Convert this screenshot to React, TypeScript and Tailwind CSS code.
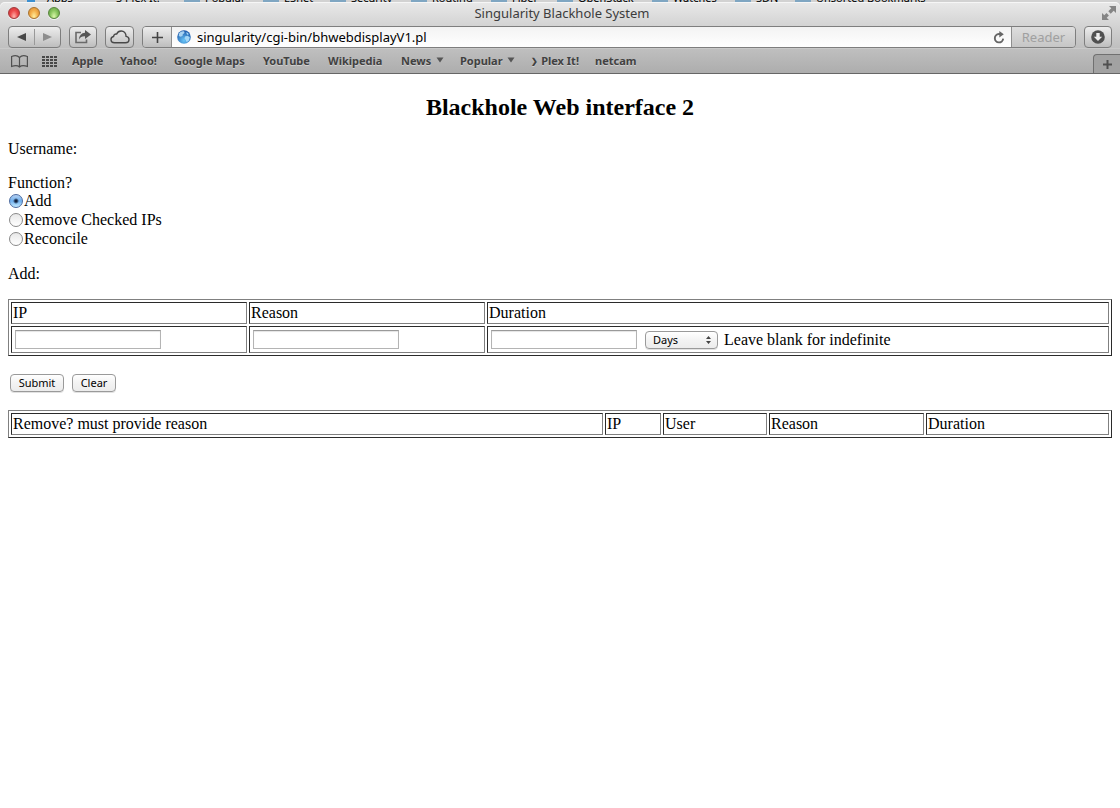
import type { ReactNode } from "react";

const ui = "font-['Noto_Sans','Open_Sans',sans-serif]";
const toolButton =
  "flex h-[22px] items-center justify-center rounded-[4px] border border-[#7e7e7e] bg-linear-to-b from-[#ededed] to-[#bebebe]";
const pushButton =
  "h-[18px] rounded-[4px] border border-[#9a9a9a] bg-linear-to-b from-white via-[#f3f3f3] to-[#ececec] text-[11px] leading-4 text-black shadow-[0_1px_0_#e2e2e2]";
const tableFrame =
  "w-full table-fixed border-separate border-spacing-[2px] border border-t-[#808080] border-r-[#2b2b2b] border-b-[#2b2b2b] border-l-[#808080]";
const cell =
  "border border-t-[#2b2b2b] border-r-[#808080] border-b-[#808080] border-l-[#2b2b2b] p-px text-left font-normal";
const field =
  "m-[2px] block h-[19px] w-[146px] border border-[#b4b4b4] border-t-[#9a9a9a] bg-white px-1 text-[11px] shadow-[inset_0_1px_1px_#e4e4e4] outline-none";

const folders = [
  { name: "Popular", width: "w-[79px]" },
  { name: "ESnet", width: "w-[67px]" },
  { name: "Security", width: "w-[81px]" },
  { name: "Routing", width: "w-[80px]" },
  { name: "Fiber", width: "w-[66px]" },
  { name: "OpenStack", width: "w-[95px]" },
  { name: "Watches", width: "w-[83px]" },
  { name: "SDN", width: "w-[60px]" },
  { name: "Unsorted Bookmarks", width: "w-[160px]" },
];

function BackWindow() {
  return (
    <div className="flex h-[2px] items-end overflow-hidden bg-[#d2d2d2] text-[11px] leading-2 whitespace-nowrap text-black" aria-hidden="true">
      <span className="flex w-[116px] shrink-0 items-end gap-3 pl-[27px]">
        <span className="h-[2px] w-2 bg-[#3b8fd0]" />
        <span>Apps</span>
      </span>
      <span className="w-[68px] shrink-0">S Plex It!</span>
      {folders.map((f) => (
        <span key={f.name} className={`flex shrink-0 items-end gap-[5px] ${f.width}`}>
          <span className="h-[2px] w-4 shrink-0 bg-[#7fa6c2]" />
          {f.name}
        </span>
      ))}
    </div>
  );
}

function Light({ name, color }: { name: string; color: string }) {
  return (
    <button
      aria-label={name}
      className={`h-3 w-3 rounded-full border shadow-[0_1px_0_#f2f2f2] ${color}`}
    />
  );
}

function Bookmark({ children, menu, width }: { children: ReactNode; menu?: boolean; width: string }) {
  return (
    <a href="#" className={`flex shrink-0 items-center justify-between whitespace-nowrap ${width}`}>
      {children}
      {menu && (
        <svg width="8" height="6" viewBox="0 0 8 6" className="mb-[2px]">
          <path d="M0.500 0.500h7L4 5.500z" fill="#555" />
        </svg>
      )}
    </a>
  );
}

function BrowserChrome() {
  return (
    <header className={`bg-[#d2d2d2] ${ui}`}>
      <BackWindow />
      <div className="rounded-t-[5px] border-b border-[#666] bg-linear-to-b from-[#e9e9e9] via-[#c2c2c2] via-60% to-[#adadad] shadow-[inset_0_1px_0_#f6f6f6]">
        <div className="grid h-6 grid-cols-[1fr_auto_1fr] items-center pr-1 pb-[2px] pl-2">
          <div className="flex gap-2">
            <Light name="Close" color="border-[#a3383a] bg-radial-[at_50%_85%] from-[#ffb5ae] via-[#ee4b4c] to-[#c22c30]" />
            <Light name="Minimize" color="border-[#a9722d] bg-radial-[at_50%_85%] from-[#fff0a0] via-[#f5b04b] to-[#cf8430]" />
            <Light name="Zoom" color="border-[#57843c] bg-radial-[at_50%_85%] from-[#dcf8ac] via-[#8cc860] to-[#5a963e]" />
          </div>
          <span className="text-[13px] leading-4 text-[#3c3c3c]">Singularity Blackhole System</span>
          <button aria-label="Full screen" className="justify-self-end">
            <svg width="14" height="14" viewBox="0 0 14 14" fill="#858585">
              <path d="M7 0h7v7l-2.300-2.300-3 3-2.400-2.400 3-3z" />
              <path d="M0 7v7h7l-2.300-2.300 2.200-2.200-2.400-2.400-2.200 2.200z" />
            </svg>
          </button>
        </div>

        <div className="flex gap-2 px-2">
          <div className={`${toolButton} w-[53px]`}>
            <button aria-label="Back" className="flex h-4 flex-1 items-center justify-center border-r border-[#999]">
              <svg width="9" height="8" viewBox="0 0 9 8"><path d="M9 0v8L0 4z" fill="#484848" /></svg>
            </button>
            <button aria-label="Forward" className="flex h-4 flex-1 items-center justify-center">
              <svg width="9" height="8" viewBox="0 0 9 8"><path d="M0 0v8l9-4z" fill="#8d8d8d" /></svg>
            </button>
          </div>
          <button aria-label="Share" className={`${toolButton} w-7`}>
            <svg width="18" height="14" viewBox="0 0 18 14">
              <path d="M7 2.500H2v10h10.500V9.500" fill="none" stroke="#6a6a6a" strokeWidth="1.600" />
              <path d="M11 0l6 4.500-6 4.500V6.300C8 6.200 6.300 7 5 9.500 5.200 5.500 7.500 3 11 2.800z" fill="#555" />
            </svg>
          </button>
          <button aria-label="iCloud tabs" className={`${toolButton} w-[29px]`}>
            <svg width="20" height="14" viewBox="0 0 20 14" fill="none" stroke="#484848" strokeWidth="1.400">
              <path d="M4.500 12.800h11c2 0 3.500-1.300 3.500-3.200 0-1.800-1.200-3-2.900-3.200C16 3.300 14 1 11.200 1 9 1 7.400 2.200 6.700 4 4.900 3.700 3.700 4.800 3.600 6.500 2 6.800 1 8 1 9.600c0 1.900 1.500 3.200 3.500 3.200z" />
            </svg>
          </button>
          <div className="flex h-[22px] min-w-0 flex-1 overflow-hidden rounded-[4px] border border-[#7e7e7e]">
            <button aria-label="Add bookmark" className="flex w-[29px] shrink-0 items-center justify-center border-r border-[#8e8e8e] bg-linear-to-b from-[#ededed] to-[#bebebe]">
              <svg width="11" height="11" viewBox="0 0 11 11"><path d="M5.500 0v11M0 5.500h11" stroke="#444" strokeWidth="1.600" /></svg>
            </button>
            <div className="flex min-w-0 flex-1 items-center bg-linear-to-b from-[#f3f3f3] to-white pr-[6px] pl-[5px]">
              <svg width="14" height="14" viewBox="0 0 14 14" className="shrink-0">
                <defs>
                  <radialGradient id="globe" cx="0.5" cy="0.75" r="0.75">
                    <stop offset="0" stopColor="#68c4f6" />
                    <stop offset="1" stopColor="#1c55a8" />
                  </radialGradient>
                </defs>
                <circle cx="7" cy="7" r="6.800" fill="url(#globe)" />
                <path d="M2 3.500C3.500 1.500 5.500 1 7.200 1.500L7.500 3 5.800 4.200 5.500 6 3.500 6.800 1.800 6z" fill="#a9d3f2" />
                <path d="M8 6.500l2.500-.8 2.300 1.500-.9 3.200-2.300 1.900-.8-2.300L7.500 8.500zM9 2.200l2 .9.800 1.500-1.600.2z" fill="#a3d6f6" />
              </svg>
              <input
                aria-label="Address"
                defaultValue="singularity/cgi-bin/bhwebdisplayV1.pl"
                className="ml-[6px] h-5 min-w-0 flex-1 bg-transparent text-[13px] leading-5 text-black outline-none"
              />
              <button aria-label="Reload">
                <svg width="12" height="13" viewBox="0 0 12 13">
                  <path d="M7.500 3H5.800a4.200 4.200 0 1 0 4.400 4.700" fill="none" stroke="#666" strokeWidth="1.900" />
                  <path d="M6.300 0l4.500 3.200-4.500 3.300z" fill="#666" />
                </svg>
              </button>
            </div>
            <button className="w-16 shrink-0 border-l border-[#8e8e8e] bg-linear-to-b from-[#dedede] to-[#c6c6c6] text-[13px] leading-5 text-[#a0a0a0]">
              Reader
            </button>
          </div>
          <button aria-label="Downloads" className={`${toolButton} w-7`}>
            <svg width="14" height="14" viewBox="0 0 14 14">
              <circle cx="7" cy="7" r="6.800" fill="#505050" />
              <path d="M5.300 3h3.400v3.800h2.500L7 11 2.800 6.800h2.500z" fill="#ececec" />
            </svg>
          </button>
        </div>

        <nav className="flex h-[25px] items-center border-t border-[#c9c9c9] pl-[10px] text-[11px] leading-4 font-bold text-[#414141] [text-shadow:0_1px_0_#cfcfcf]">
          <button aria-label="Bookmarks" className="shrink-0">
            <svg width="19" height="13" viewBox="0 0 19 13" fill="none" stroke="#505050" strokeWidth="1.200">
              <path d="M9.500 2.500C8 .8 4.500 .3 1.600 1.500V11.500c2.900-1 6.400-.8 7.900.5 1.500-1.300 5-1.500 7.900-.5V1.500C14.500 .3 11 .8 9.500 2.500zV12" />
            </svg>
          </button>
          <button aria-label="Top Sites" className="ml-[13px] shrink-0">
            <svg width="15" height="11" viewBox="0 0 15 11" fill="#484848">
              {[0, 3, 6, 9].map((y) => [0, 4, 8, 12].map((x) => <rect key={`${x}-${y}`} x={x} y={y} width="3" height="2" />))}
            </svg>
          </button>
          <div className="ml-[15px] flex min-w-0 flex-1 gap-4 overflow-hidden">
            <Bookmark width="w-8">Apple</Bookmark>
            <Bookmark width="w-[38px]">Yahoo!</Bookmark>
            <Bookmark width="w-[73px]">Google Maps</Bookmark>
            <Bookmark width="w-[49px]">YouTube</Bookmark>
            <Bookmark width="w-[57px]">Wikipedia</Bookmark>
            <Bookmark width="w-[43px]" menu>News</Bookmark>
            <Bookmark width="w-[55px]" menu>Popular</Bookmark>
            <Bookmark width="w-[48px]"><span className="text-[8px]">❯</span>Plex It!</Bookmark>
            <Bookmark width="w-[42px]">netcam</Bookmark>
          </div>
          <button aria-label="New tab" className="flex h-[19px] w-[27px] items-center justify-center self-end rounded-tl-[4px] border-t border-l border-[#707070] bg-[#a2a2a2]">
            <svg width="9" height="9" viewBox="0 0 9 9"><path d="M4.500 0v9M0 4.500h9" stroke="#505050" strokeWidth="2" /></svg>
          </button>
        </nav>
      </div>
    </header>
  );
}

function Choice({ label, checked }: { label: string; checked?: boolean }) {
  return (
    <label className="flex h-[19px] w-fit items-start">
      <input
        type="radio"
        name="function"
        defaultChecked={checked}
        className="mt-[2px] ml-px h-[14px] w-[14px] appearance-none rounded-full border border-[#8a8a8a] bg-linear-to-b from-[#e8e8e8] to-white checked:border-[#4c6ba0] checked:bg-[radial-gradient(circle,#12233f_0,#12233f_1px,transparent_3px),linear-gradient(#b4d0f2,#6fb0ee_50%,#c4ebff)]"
      />
      <span className="ml-px leading-[18px]">{label}</span>
    </label>
  );
}

export default function App() {
  return (
    <div className="min-h-screen bg-white">
      <BrowserChrome />
      <main className="px-2 pt-5 font-['Liberation_Serif',serif] text-base leading-[18px] text-black">
        <h2 className="text-center text-2xl leading-[26px] font-bold">Blackhole Web interface 2</h2>
        <p className="mt-5">Username:</p>
        <fieldset className="mt-4">
          <legend>Function?</legend>
          <Choice label="Add" checked />
          <Choice label="Remove Checked IPs" />
          <Choice label="Reconcile" />
        </fieldset>
        <p className="my-4">Add:</p>

        <table className={tableFrame}>
          <colgroup>
            <col className="w-[236px]" />
            <col className="w-[236px]" />
            <col />
          </colgroup>
          <thead>
            <tr>
              <th className={cell}>IP</th>
              <th className={cell}>Reason</th>
              <th className={cell}>Duration</th>
            </tr>
          </thead>
          <tbody>
            <tr>
              <td className={cell}><input aria-label="IP" className={field} /></td>
              <td className={cell}><input aria-label="Reason" className={field} /></td>
              <td className={cell}>
                <div className="flex items-center">
                  <input aria-label="Duration" className={field} />
                  <span className="relative ml-[6px]">
                    <select aria-label="Duration unit" className={`${pushButton} ${ui} block w-[73px] appearance-none pl-[7px]`}>
                      <option>Days</option>
                    </select>
                    <svg width="5" height="8" viewBox="0 0 5 8" className="pointer-events-none absolute top-[5px] right-[7px]">
                      <path d="M2.500 0L5 3H0zM2.500 8L0 5h5z" fill="#444" />
                    </svg>
                  </span>
                  <span className="ml-[6px]">Leave blank for indefinite</span>
                </div>
              </td>
            </tr>
          </tbody>
        </table>

        <div className={`my-[18px] ml-[2px] flex gap-2 ${ui}`}>
          <button className={`${pushButton} w-[54px]`}>Submit</button>
          <button className={`${pushButton} w-11`}>Clear</button>
        </div>

        <table className={tableFrame}>
          <colgroup>
            <col />
            <col className="w-[56px]" />
            <col className="w-[104px]" />
            <col className="w-[155px]" />
            <col className="w-[183px]" />
          </colgroup>
          <thead>
            <tr>
              <th className={cell}>Remove? must provide reason</th>
              <th className={cell}>IP</th>
              <th className={cell}>User</th>
              <th className={cell}>Reason</th>
              <th className={cell}>Duration</th>
            </tr>
          </thead>
        </table>
      </main>
    </div>
  );
}
